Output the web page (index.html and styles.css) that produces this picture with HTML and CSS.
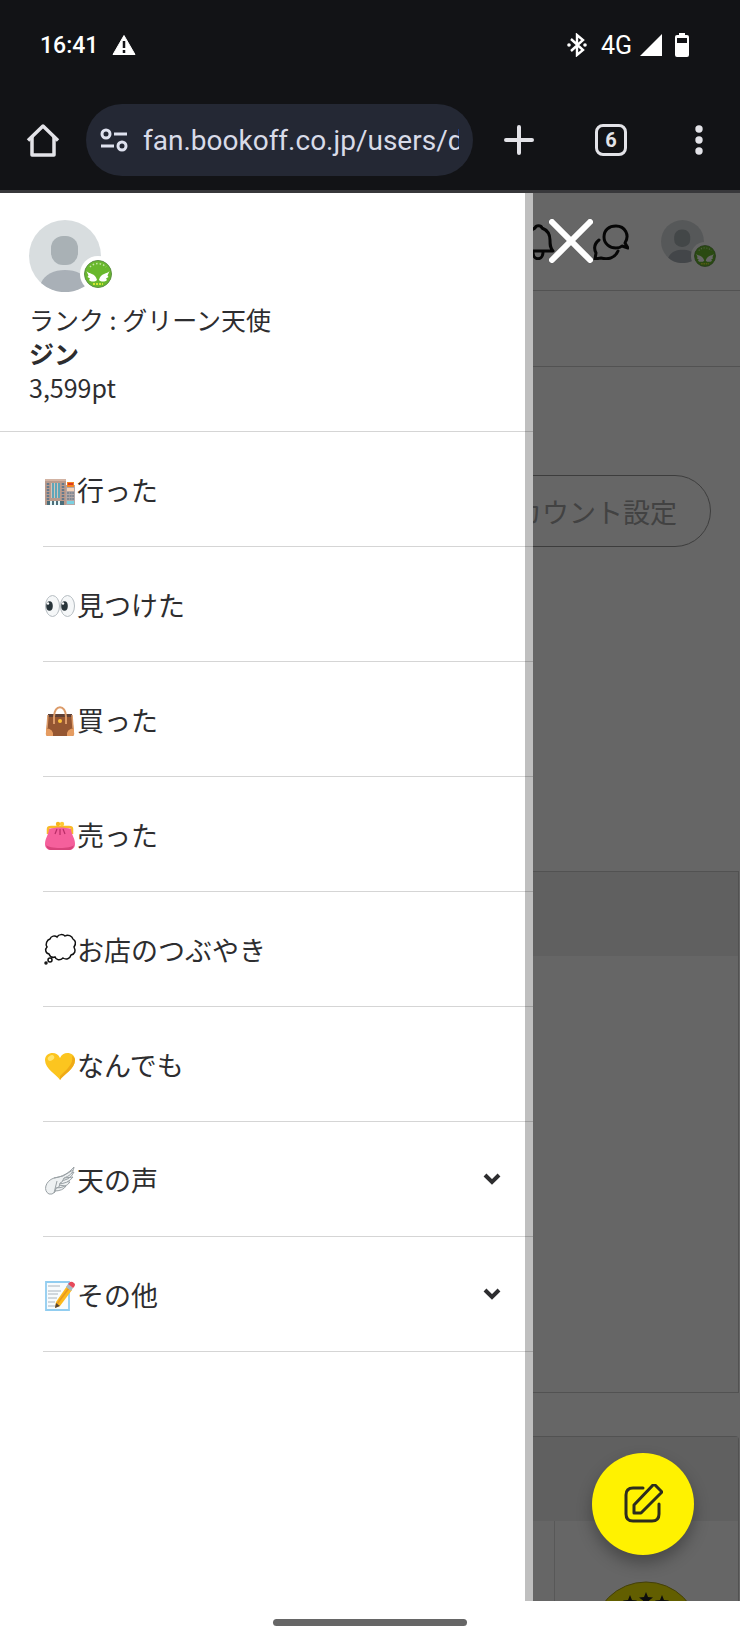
FILE: index.html
```html
<!DOCTYPE html>
<html lang="ja">
<head>
  <meta charset="UTF-8" />
  <meta name="viewport" content="width=device-width, initial-scale=1.0"/>
  <title>fan.bookoff.co.jp</title>
  <link rel="stylesheet" href="styles.css">
</head>
<body>
  <!-- Shared shapes -->
  <svg width="0" height="0" class="defs" aria-hidden="true">
    <symbol id="person" viewBox="0 0 72 72">
      <circle cx="36" cy="36" r="36" fill="#d8dddf"/>
      <rect x="22" y="16" width="27" height="29" rx="12" fill="#a9b1b5"/>
      <path d="M12 63C16 54 25 50 36 50s20 4 24 13A36 36 0 0 1 12 63z" fill="#a9b0b7"/>
    </symbol>
    <symbol id="angel" viewBox="0 0 36 36">
      <circle cx="18" cy="18" r="18" fill="#fff"/>
      <circle cx="18" cy="18" r="13.5" fill="#69b82d" stroke="#5d8f45"/>
      <path d="M10 11a11 11 0 0 1 16 0" fill="none" stroke="#c5e6a4" stroke-width="1.500" stroke-dasharray="1.500 2"/>
      <path d="M6.500 15c2 3 9 2 10.500 9-2 2-6 2-8 0l1-1.500-2.500-1.500 1-1.500zM29.500 15c-2 3-9 2-10.500 9 2 2 6 2 8 0l-1-1.500 2.500-1.500-1-1.500z" fill="#fff"/>
      <path d="M13 28h10" stroke="#d3e433" stroke-width="2" stroke-dasharray="2 1"/>
    </symbol>
  </svg>

  <!-- Status bar -->
  <div class="status">
    <span class="clock">16:41</span>
    <svg width="24" height="22" viewBox="0 0 24 22"><path d="M12 1.500 23 20.500H1z" fill="#fff" stroke="#fff" stroke-linejoin="round"/><path d="M12 7v7M12 16v3" stroke="#121316" stroke-width="2.500"/></svg>
    <svg class="bluetooth" width="20" height="24" viewBox="0 0 20 24"><path d="M4 6l12 11-6 5V2l6 5L4 18" fill="none" stroke="#fff" stroke-width="2.400"/><circle cx="2" cy="12" r="1.800" fill="#fff"/><circle cx="18" cy="12" r="1.800" fill="#fff"/></svg>
    <span class="network">4G</span>
    <svg class="signal" width="22" height="22" viewBox="0 0 22 22"><path d="M22 0v22H0z" fill="#fff"/></svg>
    <svg width="14" height="24" viewBox="0 0 14 24"><path d="M4 0h6v2h2q2 0 2 2v18q0 2-2 2H2q-2 0-2-2V4q0-2 2-2h2z" fill="#fff"/><path d="M2 5h10v5H2z" fill="#121316"/></svg>
  </div>

  <!-- Browser toolbar -->
  <div class="toolbar">
    <button class="tool" aria-label="ホーム">
      <svg width="34" height="34" viewBox="0 0 34 34" fill="none" stroke="#e3e3e8" stroke-width="3.500" stroke-linejoin="round"><path d="M2 17.500 17 3l15 14.500"/><path d="M6 14v18h22V14"/></svg>
    </button>
    <label class="address">
      <svg width="28" height="24" viewBox="0 0 28 24" fill="none" stroke="#dfe2ef" stroke-width="3"><circle cx="6" cy="6" r="4"/><path d="M14 6h13M1 18h13"/><circle cx="22" cy="18" r="4"/></svg>
      <input type="text" value="fan.bookoff.co.jp/users/d" aria-label="アドレス">
    </label>
    <button class="tool" aria-label="新しいタブ">
      <svg width="30" height="30" viewBox="0 0 30 30"><path d="M15 2v26M2 15h26" stroke="#e3e3e8" stroke-width="4" stroke-linecap="round"/></svg>
    </button>
    <button class="tool" aria-label="タブ一覧"><span class="tabs">6</span></button>
    <button class="tool" aria-label="メニュー">
      <svg width="8" height="30" viewBox="0 0 8 30" fill="#e3e3e8"><circle cx="4" cy="4" r="3.700"/><circle cx="4" cy="15" r="3.700"/><circle cx="4" cy="26" r="3.700"/></svg>
    </button>
  </div>

  <main class="viewport">
    <!-- Page under the menu -->
    <div class="page">
      <header class="page-header">
        <svg width="36" height="36" viewBox="0 0 36 36" fill="none" stroke="#111" stroke-width="3" stroke-linejoin="round"><path d="M-1 27c3-3 3-6 3-11 0-6 3-10 8-12 1-3 6-3 7 0 5 2 8 6 8 12 0 5 0 8 3 11z"/><path d="M8 28c0 9 10 9 10 0"/></svg>
        <svg width="36" height="36" viewBox="0 0 36 36" fill="none" stroke="#111" stroke-width="3" stroke-linejoin="round" stroke-linecap="round"><path d="M32 19c5-8 0-17-9-17-7 0-12 4-12 11s6 11 12 11c3 0 5-1 6-2l6 2z"/><path d="M6 16c-5 4-5 9-3 13l-1 6 6-1c7 2 14 0 17-7"/></svg>
        <div class="avatar avatar-small">
          <svg class="face"><use href="#person"/></svg>
          <svg class="rank"><use href="#angel"/></svg>
        </div>
      </header>
      <div class="page-tabs"></div>
      <section class="account"><button class="account-btn">アカウント設定</button></section>
      <section class="card">
        <div class="card-head"></div>
        <div class="card-body"></div>
      </section>
      <section class="card card-last">
        <div class="card-head"></div>
        <div class="medals">
          <svg width="108" height="108" viewBox="0 0 108 108"><circle cx="54" cy="54" r="53" fill="#f5ea00" stroke="#a79f18"/><g fill="#222"><path id="star" d="m54 11 2 5 5 .500-4 3 1.500 5-4.500-3-4.500 3 1.500-5-4-3 5-.500z"/><use href="#star" x="-16" y="3"/><use href="#star" x="16" y="3"/></g></svg>
        </div>
      </section>
    </div>

    <!-- Slide menu -->
    <div class="overlay">
      <aside class="drawer">
        <div class="profile">
          <div class="avatar">
            <svg class="face"><use href="#person"/></svg>
            <svg class="rank"><use href="#angel"/></svg>
          </div>
          <p>ランク : グリーン天使</p>
          <p class="name">ジン</p>
          <p>3,599pt</p>
        </div>
        <nav class="menu">
          <a href="#">
            <svg class="emoji" viewBox="0 0 30 30"><path d="M0 3h21v26H0z" fill="#b99a8c"/><path d="M0 3h21v2H0z" fill="#d2b3a3"/><path d="M21 9h9v20h-9z" fill="#b3a7a6"/><path d="M6 7h9v15H6z" fill="#d6c2b8"/><path d="M8 7v15M11 7v15M14 7v15" stroke="#5fa6b8" stroke-width="2"/><path d="M3 7v17M18 7v17" stroke="#64798c" stroke-width="2.500" stroke-dasharray="2 1"/><path d="M2 25h17v4H2z" fill="#4b6d79"/><path d="M6 25v4M10 25v4M14 25v4" stroke="#e4f6f8" stroke-width="2"/><path d="M22 6h7v5h-7z" fill="#f58220"/><path d="M23 8h5" stroke="#d93a22" stroke-width="2"/><path d="M22 12h7v3h-7z" fill="#f4d3b8"/><path d="M22 17h7M22 20h7M22 23h7" stroke="#71808d" stroke-width="1.500" stroke-dasharray="2 .600"/><path d="M22 25h7v3h-7z" fill="#7bd0e1"/></svg>
            <span>行った</span>
          </a>
          <a href="#">
            <svg class="emoji" viewBox="0 0 30 30"><g fill="#f5f7f8" stroke="#b5bcc1"><ellipse cx="7.500" cy="15" rx="7" ry="10.500"/><ellipse cx="22.500" cy="15" rx="7" ry="10.500"/></g><g fill="#28343a"><ellipse cx="4.500" cy="15" rx="3.300" ry="4.800"/><ellipse cx="19.500" cy="15" rx="3.300" ry="4.800"/></g><circle cx="3" cy="12.500" r="1.200" fill="#fff"/><circle cx="18" cy="12.500" r="1.200" fill="#fff"/></svg>
            <span>見つけた</span>
          </a>
          <a href="#">
            <svg class="emoji" viewBox="0 0 30 30"><path d="M3 9h24l2 19q0 2-2 2H3q-2 0-2-2z" fill="#955632"/><path d="M3 8h24v3H3z" fill="#5e4037"/><path d="M1 22q8 1 7 8H3q-3 0-2-4zM29 22q-8 1-7 8h5q3 0 2-4z" fill="#e59c61"/><path d="M9 18V11c0-13 12-13 12 0v7" fill="none" stroke="#dc9b69" stroke-width="2"/><path d="M3 9 2 22M27 9l1 13" stroke="#dc9b69" stroke-width="1.500"/><circle cx="15" cy="15" r="2" fill="#ffc23a"/></svg>
            <span>買った</span>
          </a>
          <a href="#">
            <svg class="emoji" viewBox="0 0 30 30"><path d="M3 13V8q0-2 3-2h18q3 0 3 2v5" fill="none" stroke="#f9b928" stroke-width="2.500"/><path d="M4 8c6-2 16-2 22 0 0 5 4 9 4 15 0 4-3 6-6 6H6c-3 0-6-2-6-6C0 17 4 13 4 8z" fill="#f5609c"/><path d="M1 24c3 4 25 4 28 0-1 4-3 5-6 5H7c-3 0-5-1-6-5z" fill="#d8437b"/><path d="m12 8-2 5M15 8v6M18 8l2 5" stroke="#b92d67" stroke-width="1.200"/><circle cx="13" cy="3" r="2.200" fill="#f7b41c"/><circle cx="17" cy="3" r="2.200" fill="#ffc933"/></svg>
            <span>売った</span>
          </a>
          <a href="#">
            <svg class="emoji" viewBox="0 0 30 30" fill="#fff" stroke="#111" stroke-width="1.500"><path d="M5 3c1-3 5-4 7-2 2-3 6-3 8-1 3-2 7 0 8 3 3 2 3 5 1 8 2 4 1 7-3 8-1 4-5 5-8 3-3 3-7 2-8-1-3 1-5 0-6-3-4-1-4-5-2-7-2-3 0-7 3-8z"/><circle cx="5" cy="24" r="2"/><circle cx="1" cy="27" r="1"/></svg>
            <span>お店のつぶやき</span>
          </a>
          <a href="#">
            <svg class="emoji" viewBox="0 0 30 30"><path d="M15 29C12 24 0 18 0 9 0 1 12-1 15 7 18-1 30 1 30 9c0 9-12 15-15 20z" fill="#fcc51f"/><path d="M27 5c2 8-6 14-12 20v4c3-5 15-11 15-20 0-2-1-3-3-4z" fill="#efaa16"/><ellipse cx="6" cy="7" rx="3.500" ry="2.500" fill="#ffe36c" transform="rotate(-35 6 7)"/></svg>
            <span>なんでも</span>
          </a>
          <a href="#">
            <svg class="emoji" viewBox="0 0 30 30" fill="#eef1f2" stroke="#9aa1a5" stroke-linejoin="round"><path d="M9 25q9 0 12-5l-8-1zM10 22q11 0 15-6l-9-1z"/><path d="M12 18q11 0 16-7l-9 1zM13 15q12 0 16-9l-10 4z"/><path d="M4 28C-2 25 0 15 9 12c8-1 15-5 20-11-1 7-5 9-10 11l-2 4-2 1-1 4-3 1-1 4q-3 3-6 2z"/><path d="M9 12l9-2 10-6M9 27l3-12" fill="none"/></svg>
            <span>天の声</span>
            <svg class="chevron" viewBox="0 0 18 12"><path d="m2 2 7 7 7-7"/></svg>
          </a>
          <a href="#">
            <svg class="emoji" viewBox="0 0 30 30"><path d="M1 1h23v28H1z" fill="#f7fbfd" stroke="#91cdf0" stroke-width="1.800"/><path d="M3 5h12M3 10h13M3 13h10M3 17h9M3 21h7M3 25h9" stroke="#aab4bc"/><path d="m22 5 5 4-12 16-5 2 1-6z" fill="#fcb91b"/><path d="m24 7-12 16" stroke="#e79720" stroke-width="1.500"/><path d="m10 27 1-5 4 3z" fill="#554539"/><path d="m21 6 2-3 5 4-2 3z" fill="#a8bac3"/><path d="m23 3 2-2q2-1 4 1 2 1 0 4l-1 1z" fill="#e6495a"/></svg>
            <span>その他</span>
            <svg class="chevron" viewBox="0 0 18 12"><path d="m2 2 7 7 7-7"/></svg>
          </a>
        </nav>
      </aside>
      <button class="close" aria-label="閉じる">
        <svg width="44" height="44" viewBox="0 0 44 44"><path d="m3 3 38 38M41 3 3 41" stroke="#fff" stroke-width="6" stroke-linecap="round"/></svg>
      </button>
    </div>

    <button class="post" aria-label="投稿する">
      <svg width="40" height="40" viewBox="0 0 40 40" fill="none" stroke="#2d2d1e" stroke-width="3" stroke-linejoin="round" stroke-linecap="round"><path d="M20 4H10q-7 0-7 7v19q0 7 7 7h19q7 0 7-7V20"/><path d="M11 21v8h7L39 8l-8-8z"/></svg>
    </button>
  </main>

  <div class="gesture"><span></span></div>
</body>
</html>
```
FILE: styles.css
```css
* {
  box-sizing: border-box;
}
body {
  margin: 0;
  min-height: 100vh;
  display: flex;
  flex-direction: column;
  font-family: "Noto Sans CJK JP", sans-serif;
  color: #2d2d2f;
  background-color: #fff;
}
svg {
  display: block;
  flex-shrink: 0;
}
button {
  border: none;
  background: none;
  padding: 0;
  font-family: inherit;
}
p {
  margin: 0;
}
.defs {
  position: absolute;
}

/* status bar */
.status {
  height: 90px;
  padding: 0 51px 0 40px;
  display: flex;
  align-items: center;
  background-color: #121316;
  color: #fff;
  font-family: Roboto, sans-serif;
  font-size: 23px;
}
.clock {
  font-weight: 500;
  margin-right: 14px;
}
.bluetooth {
  margin-left: auto;
}
.network {
  font-size: 25px;
  margin: 0 8px 0 14px;
}
.signal {
  margin-right: 13px;
}

/* browser toolbar */
.toolbar {
  display: grid;
  grid-template-columns: 86px minmax(0, 1fr) 92px 92px 83px;
  padding: 14px 0;
  background-color: #121316;
  border-bottom: 3px solid #38383b;
}
.tool {
  display: flex;
  align-items: center;
  justify-content: center;
}
.address {
  height: 72px;
  padding: 0 14px;
  display: flex;
  align-items: center;
  gap: 15px;
  border-radius: 36px;
  background-color: #242834;
}
.address input {
  flex: 1;
  min-width: 0;
  padding: 0;
  border: none;
  outline: none;
  background: none;
  color: #d8dbe8;
  font-family: Roboto, sans-serif;
  font-size: 28px;
}
.tabs {
  width: 32px;
  height: 32px;
  border: 3px solid #e3e3e8;
  border-radius: 8px;
  color: #e3e3e8;
  font-family: Roboto, sans-serif;
  font-size: 20px;
  font-weight: 700;
  line-height: 26px;
}

/* page */
.viewport {
  flex: 1;
  display: grid;
  position: relative;
  overflow: hidden;
}
.page,
.overlay {
  grid-area: 1 / 1;
  min-width: 0;
}
.page {
  display: flex;
  flex-direction: column;
}
.page-header {
  height: 98px;
  padding-right: 36px;
  display: flex;
  align-items: center;
  justify-content: flex-end;
  gap: 32px;
  border-bottom: 1px solid #ccc;
}
.page-tabs {
  height: 76px;
  border-bottom: 1px solid #ccc;
}
.account {
  height: 504px;
  padding: 108px 29px 0;
  display: flex;
  align-items: flex-start;
  justify-content: flex-end;
}
.account-btn {
  height: 72px;
  padding: 0 33px;
  border: 1px solid #999;
  border-radius: 36px;
  color: #a5a5a5;
  font-size: 27px;
}
.card {
  margin-right: 1px;
  border: 1px solid #ccc;
}
.card-head {
  height: 84px;
  background-color: #f0f0f0;
}
.card-body {
  height: 436px;
}
.card-last {
  flex: 1;
  margin-top: 43px;
  border-radius: 4px 4px 0 0;
  border-bottom: none;
}
.medals {
  width: 25%;
  height: 80px;
  margin-left: auto;
  padding-top: 60px;
  display: flex;
  justify-content: center;
  overflow: hidden;
  border-left: 1px solid #ddd;
}

/* avatar */
.avatar {
  position: relative;
  width: 72px;
  height: 72px;
}
.face {
  width: 100%;
  height: 100%;
}
.rank {
  position: absolute;
  right: -15px;
  bottom: 0;
  width: 36px;
  height: 36px;
}
.avatar-small {
  width: 43px;
  height: 43px;
}
.avatar-small .rank {
  right: -15px;
  bottom: -7px;
  width: 28px;
  height: 28px;
}

/* slide menu */
.overlay {
  position: relative;
  display: flex;
  align-items: stretch;
  background-color: rgba(0, 0, 0, 0.6);
}
.drawer {
  width: 72%;
  position: relative;
  background-color: #fff;
}
.drawer::after {
  content: "";
  position: absolute;
  top: 0;
  right: 0;
  bottom: 0;
  width: 8px;
  background-color: rgba(0, 0, 0, 0.25);
}
.profile {
  padding: 27px 29px;
  border-bottom: 1px solid #d5d5d5;
  font-size: 25px;
  line-height: 34px;
}
.profile .avatar {
  margin-bottom: 10px;
}
.name {
  font-weight: 700;
}
.menu {
  padding-left: 43px;
}
.menu a {
  height: 115px;
  padding: 0 32px 0 2px;
  display: flex;
  align-items: center;
  gap: 2px;
  border-bottom: 1px solid #d5d5d5;
  color: inherit;
  font-size: 27px;
  text-decoration: none;
}
.emoji {
  width: 30px;
  height: 30px;
  margin-top: 4px;
  overflow: visible;
}
.chevron {
  width: 18px;
  height: 12px;
  margin-left: auto;
  fill: none;
  stroke: #2d2d2f;
  stroke-width: 4;
}
.close {
  align-self: flex-start;
  padding: 26px 16px;
}
.post {
  position: absolute;
  right: 46px;
  bottom: 46px;
  width: 102px;
  height: 102px;
  display: flex;
  align-items: center;
  justify-content: center;
  border-radius: 50%;
  background-color: #fff200;
  box-shadow: 0 8px 16px rgba(0, 0, 0, 0.3);
}

/* gesture bar */
.gesture {
  height: 43px;
  display: flex;
  align-items: center;
  justify-content: center;
}
.gesture span {
  width: 194px;
  height: 7px;
  border-radius: 4px;
  background-color: #666;
}
```
